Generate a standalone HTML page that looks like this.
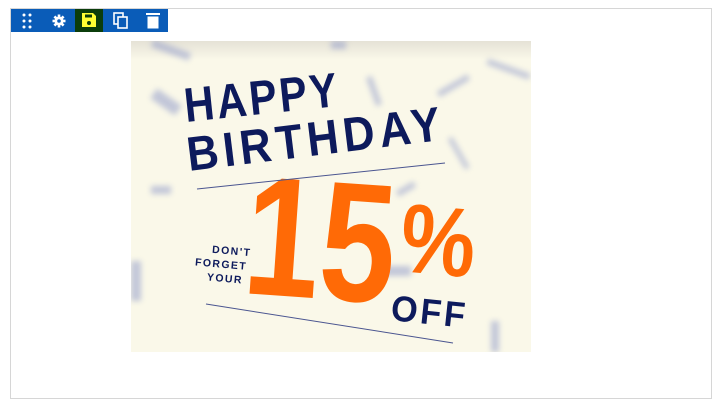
<!DOCTYPE html>
<html><head><style>
body{margin:0;width:722px;height:407px;background:#fff;position:relative;overflow:hidden;font-family:"Liberation Sans",sans-serif}
.frame{position:absolute;left:10px;top:8px;width:700px;height:389px;border:1px solid #d6d6d6}
.tb{position:absolute;left:11px;top:9px;width:157px;height:23px;background:#0a5cb8}
.sv{position:absolute;left:75px;top:9px;width:28px;height:23px;background:#0b3d0b}
.img{position:absolute;left:131px;top:41px;width:400px;height:311px}
</style></head><body>
<div class="frame"></div>
<div class="tb"></div>
<div class="sv"></div>
<svg style="position:absolute;left:0;top:0" width="200" height="40">
 <g fill="#fff">
  <circle cx="24" cy="15" r="1.5"/><circle cx="30" cy="15" r="1.5"/>
  <circle cx="24" cy="21" r="1.5"/><circle cx="30" cy="21" r="1.5"/>
  <circle cx="24" cy="27" r="1.5"/><circle cx="30" cy="27" r="1.5"/>
  <circle cx="59" cy="21" r="4.5"/>
  <g stroke="#fff" stroke-width="2.6"><line x1="59" y1="14.5" x2="59" y2="27.5"/><line x1="52.5" y1="21" x2="65.5" y2="21"/><line x1="54.4" y1="16.4" x2="63.6" y2="25.6"/><line x1="63.6" y1="16.4" x2="54.4" y2="25.6"/></g>
 </g>
 <circle cx="59" cy="21" r="1.8" fill="#0a5cb8"/>
 <path d="M82 13h11l3 3v11h-14z" fill="#ffff33"/>
 <rect x="85" y="14.5" width="7" height="3" fill="#0b3d0b"/>
 <circle cx="89" cy="23" r="2" fill="#0b3d0b"/>
 <rect x="114" y="13" width="9" height="11" fill="none" stroke="#fff" stroke-width="1.6"/>
 <rect x="118" y="17" width="9" height="11" fill="#0a5cb8" stroke="#fff" stroke-width="1.6"/>
 <rect x="146" y="13" width="14" height="2" fill="#fff"/>
 <path d="M147.5 16.5h11v12h-11z" fill="#fff"/>
</svg>
<svg class="img" viewBox="0 0 400 311" width="400" height="311">
 <defs><filter id="b"><feGaussianBlur stdDeviation="3"/></filter>
 <linearGradient id="g" x1="0" y1="0" x2="0" y2="1"><stop offset="0" stop-color="#e5e2d6"/><stop offset="0.06" stop-color="#faf8e9"/></linearGradient></defs>
 <rect width="400" height="311" fill="url(#g)"/>
 <g fill="#8a95c8" opacity="0.5" filter="url(#b)">
  <rect x="20" y="55" width="30" height="12" transform="rotate(35 35 61)"/>
  <rect x="20" y="5" width="40" height="8" transform="rotate(20 40 9)"/>
  <rect x="305" y="42" width="35" height="6" transform="rotate(-30 322 45)"/>
  <rect x="355" y="25" width="45" height="6" transform="rotate(20 377 28)"/>
  <rect x="240" y="35" width="6" height="30" transform="rotate(-20 243 50)"/>
  <rect x="325" y="95" width="5" height="35" transform="rotate(-30 327 112)"/>
  <rect x="265" y="145" width="20" height="6" transform="rotate(-30 275 148)"/>
  <rect x="0" y="220" width="10" height="40"/>
  <rect x="20" y="145" width="20" height="8"/>
  <rect x="360" y="280" width="8" height="31"/>
  <rect x="250" y="225" width="30" height="10"/>
  <rect x="200" y="0" width="15" height="8"/>
 </g>
 <g font-family="Liberation Sans,sans-serif" font-weight="bold" fill="#0d1a5c">
  <text transform="translate(55 81) rotate(-6) scale(0.9 1.05)" font-size="46" letter-spacing="3">HAPPY</text>
  <text transform="translate(58 130) rotate(-7) scale(0.95 1.05)" font-size="46" letter-spacing="5">BIRTHDAY</text>
  <text transform="translate(259 279) rotate(6) scale(0.95 1)" font-size="36" letter-spacing="3">OFF</text>
  <g font-size="10.5" letter-spacing="1.4" text-anchor="end" transform="rotate(5 118 215)">
   <text x="120" y="215">DON'T</text><text x="117" y="229">FORGET</text><text x="114" y="243">YOUR</text>
  </g>
 </g>
 <g font-family="Liberation Sans,sans-serif" font-weight="bold" fill="#ff6a06">
  <text transform="translate(110 252) rotate(4) scale(0.8 1)" font-size="170">15</text>
  <text transform="translate(267 230) rotate(5) scale(0.86 1)" font-size="98">%</text>
 </g>
 <line x1="66" y1="148" x2="314" y2="122" stroke="#4a5590" stroke-width="1"/>
 <line x1="75" y1="263" x2="322" y2="302" stroke="#4a5590" stroke-width="1"/>
</svg>
</body></html>
